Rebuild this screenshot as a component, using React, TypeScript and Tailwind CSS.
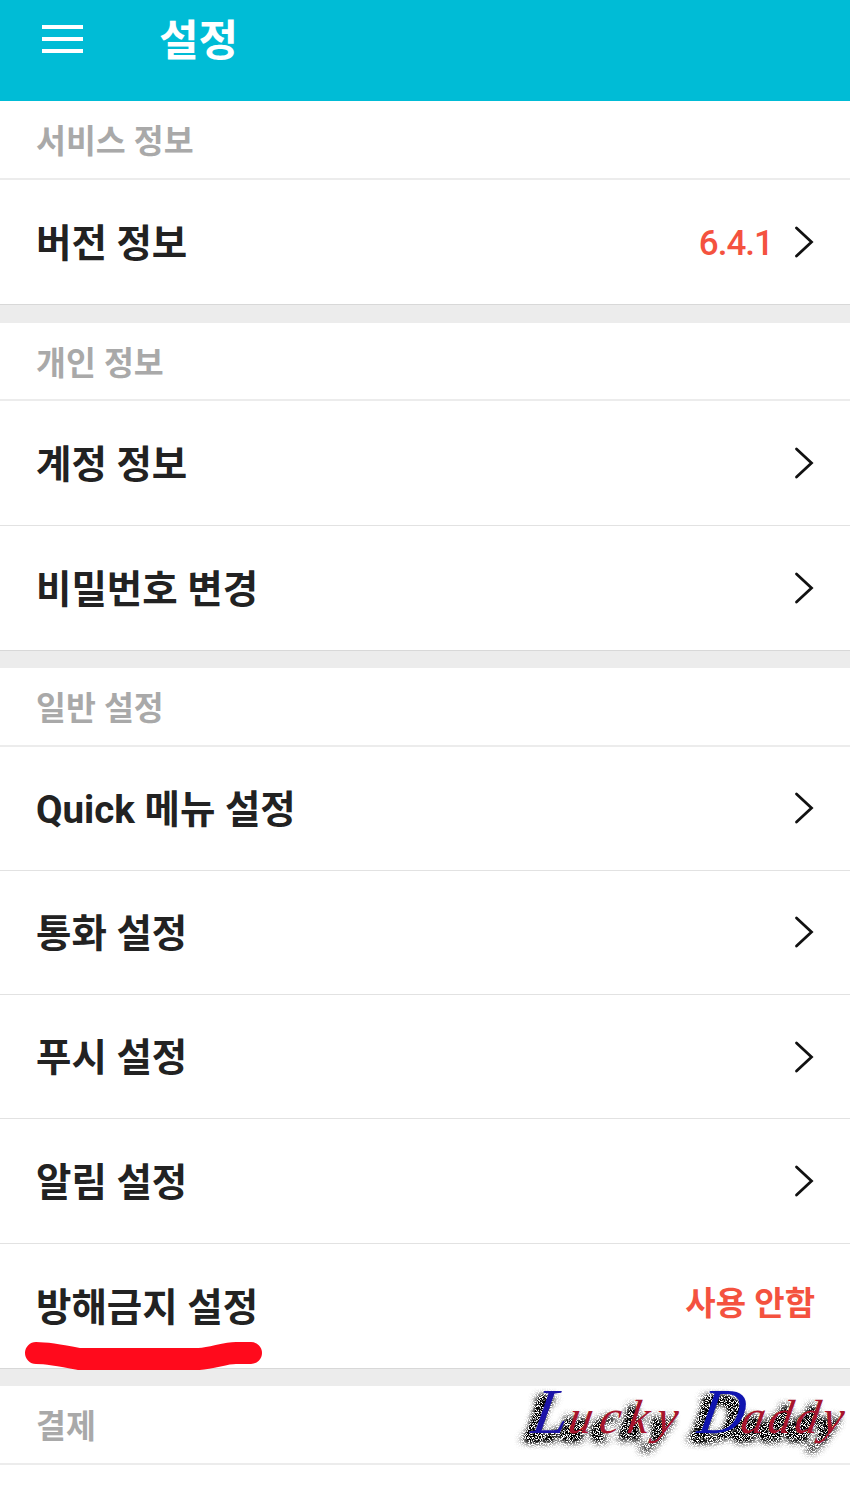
import React from "react";

const FONT = "font-['Roboto','Noto_Sans_CJK_KR',sans-serif]";

function Chevron() {
  return (
    <svg width="20" height="32" viewBox="0 0 20 32" fill="none" className="shrink-0">
      <path d="M2.5 2 L17.5 16 L2.5 30" stroke="#111" strokeWidth="2.8" strokeLinecap="round" strokeLinejoin="miter" />
    </svg>
  );
}

function Section({ label, h }: { label: string; h: string }) {
  return (
    <div className={`${h} flex items-center border-b-2 border-[#ececec] pl-9 text-[32.5px] font-bold leading-none text-[#a9a9a9]`}>
      <span className="relative top-[3px]">{label}</span>
    </div>
  );
}

function Row({
  label,
  value,
  chevron = true,
  h = "h-[124.25px] border-[#e2e2e2]",
}: {
  label: string;
  value?: string;
  chevron?: boolean;
  h?: string;
}) {
  return (
    <div className={`${h} flex items-center border-b pl-9 pr-9`}>
      <span className="relative top-[2px] flex-1 text-[38.5px] font-bold leading-none text-[#222222]">{label}</span>
      {value && chevron && (
        <span className="relative top-[1px] mr-[21px] text-[35px] font-medium leading-none tracking-[-1px] text-[#f4523f]">{value}</span>
      )}
      {value && !chevron && (
        <span className="relative -top-[2px] -mr-[1px] text-[33px] font-bold leading-none text-[#f4523f]">{value}</span>
      )}
      {chevron && <Chevron />}
    </div>
  );
}

function Gap({ h = "h-[18px]" }: { h?: string }) {
  return <div className={`${h} bg-[#ececec]`} />;
}

function Stroke() {
  return (
    <svg className="absolute left-[24px] top-[1340px]" width="240" height="30" viewBox="0 0 240 30" fill="none">
      <path d="M12 13 C 20 13, 40 16, 55 19 L 175 19 C 190 18, 200 13, 212 13 L 227 13" stroke="#ff0a1c" strokeWidth="22" strokeLinecap="round" />
    </svg>
  );
}

function Word({
  cap,
  rest,
  x,
  capFill,
  restFill,
  spacing,
}: {
  cap: string;
  rest: string;
  x: number;
  capFill: string;
  restFill: string;
  spacing: number;
}) {
  return (
    <text x={x} y="63" fill={restFill} letterSpacing={spacing}>
      <tspan fontSize="64" fill={capFill}>{cap}</tspan>
      <tspan fontSize="48" dx="-6">{rest}</tspan>
    </text>
  );
}

function Watermark() {
  return (
    <svg className="absolute left-[505px] top-[1370px]" width="345" height="104" viewBox="0 0 345 104">
      <defs>
        <filter id="spray" filterUnits="userSpaceOnUse" x="0" y="0" width="345" height="104" colorInterpolationFilters="sRGB">
          <feGaussianBlur in="SourceAlpha" stdDeviation="4" result="b" />
          <feComponentTransfer in="b" result="boost">
            <feFuncA type="linear" slope="3.6" />
          </feComponentTransfer>
          <feTurbulence type="fractalNoise" baseFrequency="1.1" numOctaves="2" seed="7" result="n" />
          <feColorMatrix in="n" type="matrix" values="0 0 0 0 0  0 0 0 0 0  0 0 0 0 0  8 0 0 0 -3.2" result="speck" />
          <feComposite in="speck" in2="boost" operator="in" />
        </filter>
      </defs>
      <g fontFamily="'Liberation Serif', serif" fontStyle="italic">
        <g filter="url(#spray)">
          <g transform="translate(15 7) skewX(-10)">
            <Word cap="L" rest="ucky" x={14} capFill="#000" restFill="#000" spacing={7} />
            <Word cap="D" rest="addy" x={180} capFill="#000" restFill="#000" spacing={3} />
          </g>
        </g>
        <g transform="translate(22 0) skewX(-10)">
          <Word cap="L" rest="ucky" x={14} capFill="#1c14a8" restFill="#a8142c" spacing={7} />
          <Word cap="D" rest="addy" x={180} capFill="#1014b0" restFill="#a8142c" spacing={3} />
        </g>
      </g>
    </svg>
  );
}

export default function App() {
  const tall = "h-[125px] border-[#e2e2e2]";
  const end = "h-[125px] border-[#d8d8d8]";
  return (
    <div className={`${FONT} relative h-[1495px] w-[850px] overflow-hidden bg-white`}>
      <header className="flex h-[101px] items-start bg-[#00bcd6] pl-[42px]">
        <div className="mt-[25px] flex w-[41px] flex-col gap-[8px]">
          <div className="h-[4px] bg-white" />
          <div className="h-[4px] bg-white" />
          <div className="h-[4px] bg-white" />
        </div>
        <h1 className="ml-[76px] mt-[20px] text-[43px] font-bold leading-none text-white">설정</h1>
      </header>
      <Section label="서비스 정보" h="h-[79px]" />
      <Row label="버전 정보" value="6.4.1" h={end} />
      <Gap />
      <Section label="개인 정보" h="h-[78px]" />
      <Row label="계정 정보" h={tall} />
      <Row label="비밀번호 변경" h={end} />
      <Gap h="h-[17px]" />
      <Section label="일반 설정" h="h-[78.5px]" />
      <Row label="Quick 메뉴 설정" />
      <Row label="통화 설정" />
      <Row label="푸시 설정" />
      <Row label="알림 설정" />
      <Row label="방해금지 설정" value="사용 안함" chevron={false} h="h-[125.5px] border-[#d8d8d8]" />
      <Gap h="h-[17px]" />
      <Section label="결제" h="h-[79px]" />
      <Stroke />
      <Watermark />
    </div>
  );
}
